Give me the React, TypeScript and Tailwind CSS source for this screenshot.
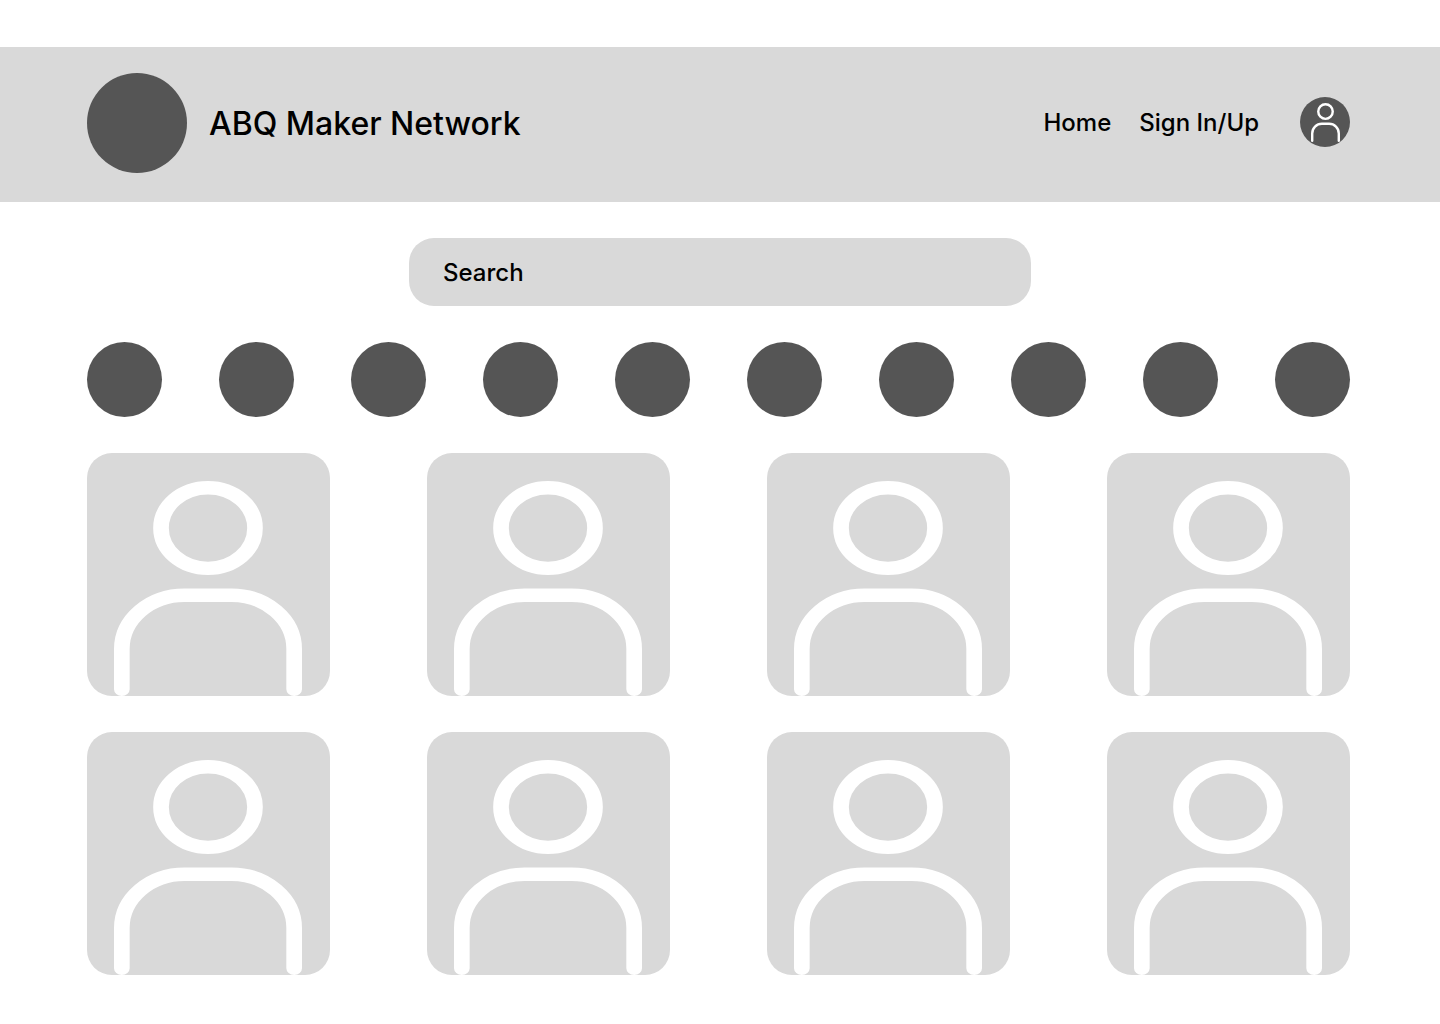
const categories = Array.from({ length: 10 }, (_, i) => `Category ${i + 1}`);
const makers = Array.from({ length: 8 }, (_, i) => `Maker ${i + 1}`);

function PersonIcon({ className }: { className: string }) {
  return (
    <svg
      viewBox="3 0 18 24"
      preserveAspectRatio="none"
      fill="none"
      stroke="currentColor"
      strokeWidth="1.5"
      strokeLinecap="round"
      className={className}
      aria-hidden="true"
    >
      <circle cx="12" cy="5.25" r="4.5" />
      <path d="M3.75 23.25V18.75A6 6 0 0 1 9.75 12.75H14.25A6 6 0 0 1 20.25 18.75V23.25" />
    </svg>
  );
}

function Header() {
  return (
    <header className="mt-[47px] flex items-center justify-between bg-[#d9d9d9] pt-[26px] pr-[90px] pb-[29px] pl-[87px]">
      <a href="#" className="flex items-center gap-[22px]">
        <span className="size-[100px] shrink-0 rounded-full bg-[#555555]" />
        <span className="pt-0.5 text-[32px] leading-10 font-medium">ABQ Maker Network</span>
      </a>
      <nav className="flex items-center text-2xl font-medium">
        <a href="#home">Home</a>
        <a href="#sign-in" className="ml-7">
          Sign In/Up
        </a>
        <button
          type="button"
          aria-label="Profile"
          className="mb-0.5 ml-[41px] flex size-[50px] shrink-0 items-center justify-center rounded-full bg-[#555555] text-white"
        >
          <PersonIcon className="h-[39px] w-[29px]" />
        </button>
      </nav>
    </header>
  );
}

export default function App() {
  return (
    <div className="flow-root bg-white pb-12 font-['Inter',sans-serif] text-black">
      <Header />
      <main>
        <form role="search" className="mt-9 flex justify-center">
          <input
            type="search"
            aria-label="Search"
            placeholder="Search"
            className="h-[68px] w-full max-w-[622px] rounded-[25px] bg-[#d9d9d9] px-[34px] text-2xl font-medium outline-none placeholder:text-black"
          />
        </form>
        <div className="pr-[90px] pl-[87px]">
          <div className="mt-9 flex justify-between">
            {categories.map((name) => (
              <button
                key={name}
                type="button"
                aria-label={name}
                className="size-[75px] rounded-full bg-[#555555]"
              />
            ))}
          </div>
          <ul className="mt-9 grid grid-cols-[repeat(4,243px)] justify-between gap-y-9">
            {makers.map((name) => (
              <li key={name}>
                <a
                  href="#maker"
                  aria-label={name}
                  className="flex size-[243px] rounded-[25px] bg-[#d9d9d9] pt-7 pl-[27px] text-white"
                >
                  <PersonIcon className="h-[215px] w-[188px]" />
                </a>
              </li>
            ))}
          </ul>
        </div>
      </main>
    </div>
  );
}
